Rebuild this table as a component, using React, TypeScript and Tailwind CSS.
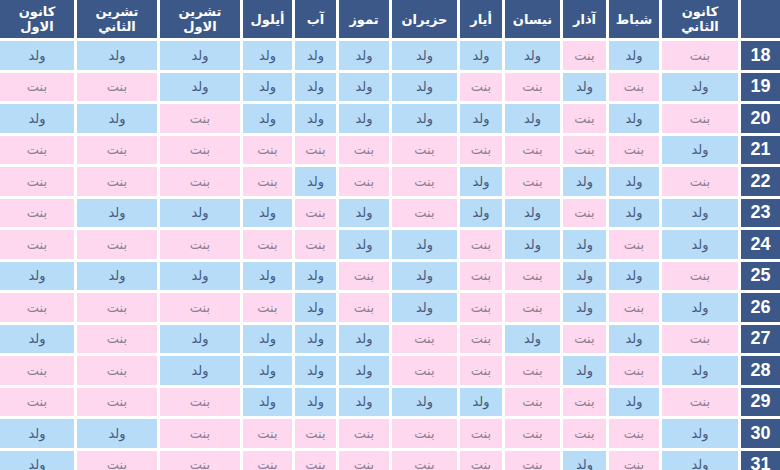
import { Fragment } from 'react';

const MONTHS: string[][] = [
  ['كانون', 'الثاني'],
  ['شباط'],
  ['آذار'],
  ['نيسان'],
  ['أيار'],
  ['حزيران'],
  ['تموز'],
  ['آب'],
  ['أيلول'],
  ['تشرين', 'الاول'],
  ['تشرين', 'الثاني'],
  ['كانون', 'الاول'],
];

// W = ولد, B = بنت — January first, December last
const ROWS: [number, string][] = [
  [18, 'BWBWWWWWWWWW'],
  [19, 'WBWBBWWWWWBB'],
  [20, 'BWBWWWWWWBWW'],
  [21, 'WBBBBBBBBBBB'],
  [22, 'BWWBWBBWBBBB'],
  [23, 'WWBWWBWBWWWB'],
  [24, 'WBWWBWWBBBBB'],
  [25, 'BWWBBWBWWWWW'],
  [26, 'WBWBBWBWBBBB'],
  [27, 'BWBWBBWWWWBW'],
  [28, 'WBWBBBWWWWBB'],
  [29, 'BWBBWWWWWBBB'],
  [30, 'WBBBBBBBBBWW'],
  [31, 'WBWBBBBBBBBW'],
];

function Cell({ kind }: { kind: string }) {
  const boy = kind === 'W';
  return (
    <div
      className={
        boy
          ? 'flex items-center justify-center bg-[#b6dcf8] text-[13px] text-[#4a5a7e]'
          : 'flex items-center justify-center bg-[#fdd8ef] text-[13px] text-[#8c8093]'
      }
    >
      {boy ? 'ولد' : 'بنت'}
    </div>
  );
}

export default function App() {
  return (
    <div className="h-[470px] w-[780px] overflow-hidden bg-white">
      <div
        dir="rtl"
        className="grid grid-cols-[39px_76px_50px_43px_55px_42px_65px_50px_41px_49px_80px_80px_74px] grid-rows-[38px_repeat(14,28.5px)] gap-[3px] bg-white font-['DejaVu_Sans',sans-serif]"
      >
        {/* header */}
        <div className="bg-[#3c5889]" />
        {MONTHS.map((m, i) => (
          <div
            key={i}
            className="flex flex-col items-center justify-center bg-[#3c5889] text-[13px] font-bold leading-[15px] text-white"
          >
            {m.map((line, j) => (
              <span key={j}>{line}</span>
            ))}
          </div>
        ))}

        {ROWS.map(([age, cells]) => (
          <Fragment key={age}>
            <div className="flex items-center justify-center bg-[#3c5889] font-['Liberation_Sans',sans-serif] text-[18px] font-bold text-white">
              {age}
            </div>
            {cells.split('').map((c, i) => (
              <Cell key={i} kind={c} />
            ))}
          </Fragment>
        ))}
      </div>
    </div>
  );
}
